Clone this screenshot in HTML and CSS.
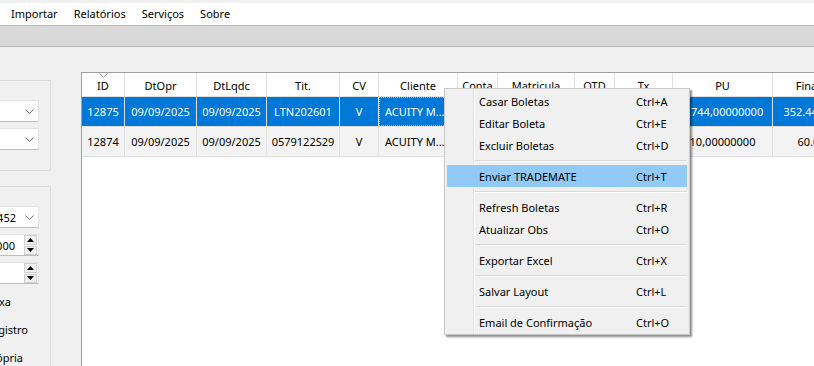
FILE: index.html
```html
<!DOCTYPE html>
<html lang="pt-BR">
<head>
<meta charset="utf-8">
<title>Boletas</title>
<link rel="stylesheet" href="styles.css">
</head>
<body>
<div class="app">
  <div class="top-strip"></div>
  <div class="menubar">
    <span class="mb-item">Importar</span>
    <span class="mb-item">Relatórios</span>
    <span class="mb-item">Serviços</span>
    <span class="mb-item">Sobre</span>
  </div>
  <div class="toolbar"></div>
  <div class="workspace">
    <div class="left">
      <div class="group g1">
        <div class="combo"><svg class="chev" width="9" height="5" viewBox="0 0 9 5"><polyline points="0.5,0.5 4.5,4.5 8.5,0.5" fill="none" stroke="#707070" stroke-width="1"/></svg></div>
        <div class="combo"><svg class="chev" width="9" height="5" viewBox="0 0 9 5"><polyline points="0.5,0.5 4.5,4.5 8.5,0.5" fill="none" stroke="#707070" stroke-width="1"/></svg></div>
      </div>
      <div class="group g2">
        <div class="combo"><span class="val">452</span><svg class="chev" width="9" height="5" viewBox="0 0 9 5"><polyline points="0.5,0.5 4.5,4.5 8.5,0.5" fill="none" stroke="#707070" stroke-width="1"/></svg></div>
        <div class="spin"><span class="val">000</span><div class="spin-btns"><div class="sb"><svg width="7" height="4" viewBox="0 0 7 4"><polygon points="3.5,0 7,4 0,4" fill="#000"/></svg></div><div class="sb"><svg width="7" height="4" viewBox="0 0 7 4"><polygon points="0,0 7,0 3.5,4" fill="#000"/></svg></div></div></div>
        <div class="spin"><span class="val"></span><div class="spin-btns"><div class="sb"><svg width="7" height="4" viewBox="0 0 7 4"><polygon points="3.5,0 7,4 0,4" fill="#000"/></svg></div><div class="sb"><svg width="7" height="4" viewBox="0 0 7 4"><polygon points="0,0 7,0 3.5,4" fill="#000"/></svg></div></div></div>
        <div class="lbl l1">Baixa</div>
        <div class="lbl l2">Registro</div>
        <div class="lbl l3">Própria</div>
      </div>
    </div>
    <div class="grid-panel">
      <div class="row head">
        <div class="c sorted">ID<svg class="sort" width="9" height="5" viewBox="0 0 9 5"><polyline points="0.5,0.5 4.5,4.5 8.5,0.5" fill="none" stroke="#9a9a9a" stroke-width="1"/></svg></div>
        <div class="c">DtOpr</div>
        <div class="c">DtLqdc</div>
        <div class="c">Tit.</div>
        <div class="c">CV</div>
        <div class="c">Cliente</div>
        <div class="c">Conta</div>
        <div class="c">Matricula</div>
        <div class="c">QTD</div>
        <div class="c">Tx</div>
        <div class="c">PU</div>
        <div class="c">Financeiro</div>
      </div>
      <div class="row sel">
        <div class="c">12875</div>
        <div class="c">09/09/2025</div>
        <div class="c">09/09/2025</div>
        <div class="c">LTN202601</div>
        <div class="c">V</div>
        <div class="c left focus">ACUITY M...</div>
        <div class="c">1234</div>
        <div class="c">98765</div>
        <div class="c">100</div>
        <div class="c">13,2500</div>
        <div class="c">3.744,00000000</div>
        <div class="c">352.440.000,00</div>
      </div>
      <div class="row alt">
        <div class="c">12874</div>
        <div class="c">09/09/2025</div>
        <div class="c">09/09/2025</div>
        <div class="c">0579122S29</div>
        <div class="c">V</div>
        <div class="c left">ACUITY M...</div>
        <div class="c">1234</div>
        <div class="c">98765</div>
        <div class="c">6</div>
        <div class="c">0,0000</div>
        <div class="c">10,00000000</div>
        <div class="c">60.000,00</div>
      </div>
    </div>
  </div>

  <div class="ctx">
    <div class="mi"><span class="ml">Casar Boletas</span><span class="ms">Ctrl+A</span></div>
    <div class="mi"><span class="ml">Editar Boleta</span><span class="ms">Ctrl+E</span></div>
    <div class="mi"><span class="ml">Excluir Boletas</span><span class="ms">Ctrl+D</span></div>
    <div class="sep"></div>
    <div class="mi hot"><span class="ml">Enviar TRADEMATE</span><span class="ms">Ctrl+T</span></div>
    <div class="sep"></div>
    <div class="mi"><span class="ml">Refresh Boletas</span><span class="ms">Ctrl+R</span></div>
    <div class="mi"><span class="ml">Atualizar Obs</span><span class="ms">Ctrl+O</span></div>
    <div class="sep"></div>
    <div class="mi"><span class="ml">Exportar Excel</span><span class="ms">Ctrl+X</span></div>
    <div class="sep"></div>
    <div class="mi"><span class="ml">Salvar Layout</span><span class="ms">Ctrl+L</span></div>
    <div class="sep"></div>
    <div class="mi"><span class="ml">Email de Confirmação</span><span class="ms">Ctrl+O</span></div>
  </div>
</div>
</body>
</html>
```

FILE: styles.css
```css
* { box-sizing: border-box; }

html, body {
  margin: 0;
  padding: 0;
}

body {
  width: 814px;
  height: 366px;
  overflow: hidden;
  background: #f0f0f0;
  font-family: "Noto Sans", "Open Sans", sans-serif;
  color: #000;
}

.app {
  position: relative;
  width: 814px;
  height: 366px;
  display: flex;
  flex-direction: column;
}

.top-strip {
  height: 3px;
  background: #f0f0f0;
  flex: none;
}

.menubar {
  height: 22px;
  flex: none;
  background: #fff;
  display: flex;
  align-items: center;
  padding-left: 3px;
}

.mb-item {
  font-size: 11px;
  padding: 0 8px;
  line-height: 22px;
}

.toolbar {
  height: 22px;
  flex: none;
  background: #d9d9d9;
  border-top: 1px solid #bababa;
  border-bottom: 1px solid #b6b6b6;
}

.workspace {
  flex: 1;
  display: flex;
  min-height: 0;
}

/* left panel (clipped at window edge) */
.left {
  width: 81px;
  flex: none;
  overflow: hidden;
}

.group {
  width: 111px;
  margin-left: -60px;
  border: 1px solid #dcdcdc;
  padding: 19px 11px 0 0;
  display: flex;
  flex-direction: column;
  gap: 6px;
  align-items: flex-end;
}

.g1 {
  margin-top: 33px;
  height: 91px;
}

.g2 {
  margin-top: 15px;
  height: 200px;
}

.combo, .spin {
  width: 90px;
  height: 22px;
  background: #fff;
  border: 1px solid #e3e3e3;
  border-bottom-color: #bdbdbd;
  display: flex;
  align-items: center;
  justify-content: flex-end;
  font-size: 11px;
  flex: none;
}

.combo .chev {
  margin-right: 4px;
  margin-left: 9px;
}

.spin .val {
  margin-right: 9px;
}

.spin-btns {
  width: 13px;
  height: 20px;
  display: flex;
  flex-direction: column;
  gap: 1px;
  margin-right: 1px;
}

.sb {
  flex: 1;
  background: #efefef;
  border: 1px solid #cfcfcf;
  display: flex;
  align-items: center;
  justify-content: center;
}

.lbl {
  width: 90px;
  height: 28px;
  line-height: 28px;
  font-size: 11px;
  text-align: right;
  white-space: nowrap;
  flex: none;
}

.l1 { margin-top: -2px; padding-right: 28px; }
.l2 { margin-top: -6px; padding-right: 11px; }
.l3 { margin-top: -6px; padding-right: 16px; }

/* grid */
.grid-panel {
  flex: 1;
  margin-top: 25px;
  border-top: 1px solid #a0a0a0;
  border-left: 1px solid #a0a0a0;
  background: #fff;
  overflow: hidden;
  min-width: 0;
}

.row {
  display: grid;
  grid-template-columns: 43px 72px 70px 73px 39px 79px 40px 77px 40px 58px 100px 100px;
  height: 30px;
  font-size: 11px;
  border-bottom: 1px solid #e0e0e0;
  width: max-content;
}

.row.head {
  height: 24px;
  background: #fff;
}

.row.sel {
  background: #0078d7;
  color: #fff;
}

.row.alt {
  background: #f3f3f3;
}

.c {
  border-right: 1px solid #e0e0e0;
  display: flex;
  align-items: center;
  justify-content: center;
  white-space: nowrap;
  overflow: hidden;
  position: relative;
}

.head .c {
  padding-top: 1px;
}

.c.left {
  justify-content: flex-start;
  padding-left: 6px;
}

.c.focus {
  outline: 1px dotted #f0a040;
  outline-offset: -1px;
}

.sort {
  position: absolute;
  top: 0;
  left: 17px;
}

/* context menu */
.ctx {
  position: absolute;
  left: 444px;
  top: 88px;
  width: 246px;
  background: #f0f0f0;
  border: 1px solid #c8c8c8;
  padding: 1px 2px;
  box-shadow: 2px 2px 2px rgba(0, 0, 0, 0.45);
  font-size: 11px;
}

.ctx::before {
  content: "";
  position: absolute;
  top: 1px;
  bottom: 1px;
  left: 28px;
  width: 1px;
  background: #e2e3e3;
  box-shadow: 1px 0 0 #fff;
}

.mi {
  position: relative;
  height: 22px;
  display: flex;
  align-items: center;
  padding-left: 32px;
}

.mi.hot {
  background: #91c9f7;
}

.ml {
  width: 157px;
  flex: none;
}

.sep {
  position: relative;
  height: 1px;
  background: #d7d7d7;
  border-bottom: 1px solid #fff;
  box-sizing: content-box;
  margin: 4px 0 3px 28px;
}
```
